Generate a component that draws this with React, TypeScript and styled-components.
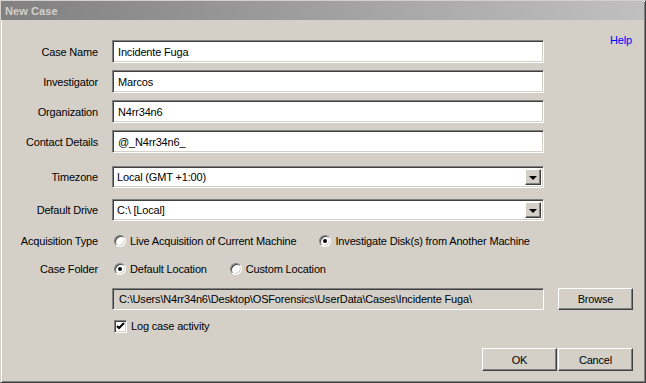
import styled, { createGlobalStyle } from "styled-components";

const GlobalStyle = createGlobalStyle`
  html, body {
    margin: 0;
    padding: 0;
    width: 646px;
    height: 383px;
    overflow: hidden;
    background: #d4d0c8;
  }
  * {
    box-sizing: border-box;
  }
`;

// Window chrome
const Window = styled.div`
  width: 646px;
  height: 383px;
  background: #d4d0c8;
  border-top: 1px solid #d4d0c8;
  border-left: 1px solid #d4d0c8;
  border-right: 1px solid #404040;
  border-bottom: 1px solid #404040;
  box-shadow: inset 1px 1px #ffffff, inset -1px -1px #808080;
  font-family: "Liberation Sans", Arial, sans-serif;
  font-size: 11px;
  letter-spacing: -0.17px;
  color: #000;
  display: flex;
  flex-direction: column;
`;

const TitleBar = styled.div`
  height: 19px;
  margin: 0 1px 0 0;
  background: linear-gradient(to right, #808080, #c0c0c0);
  display: flex;
  align-items: center;
  padding-left: 4px;
`;

const TitleText = styled.span`
  font-weight: bold;
  color: #d4d0c8;
  font-size: 11px;
  letter-spacing: 0.1px;
`;

const Body = styled.div`
  display: flex;
  flex-direction: column;
  padding-top: 20px;
  padding-left: 1px;
`;

const Row = styled.div<{ $top: number; $h: number }>`
  display: grid;
  grid-template-columns: 96px 432px 75px;
  column-gap: 14px;
  align-items: center;
  height: ${(p) => p.$h}px;
  margin-top: ${(p) => p.$top}px;
`;

const Label = styled.label`
  text-align: right;
  white-space: nowrap;
`;

const sunken = `
  border: 1px solid;
  border-color: #808080 #ffffff #ffffff #808080;
  box-shadow: inset 1px 1px #404040, inset -1px -1px #d4d0c8;
`;

const TextField = styled.div<{ $disabled?: boolean }>`
  ${sunken}
  height: 100%;
  background: ${(p) => (p.$disabled ? "#d4d0c8" : "#ffffff")};
  display: flex;
  align-items: center;
  padding-left: ${(p) => (p.$disabled ? 6 : 5)}px;
  white-space: nowrap;
  overflow: hidden;
`;

const Select = styled.div`
  ${sunken}
  height: 100%;
  background: #ffffff;
  display: flex;
  align-items: center;
  justify-content: space-between;
  padding: 2px 2px 2px 4px;
`;

const raised = `
  background: #d4d0c8;
  border: 1px solid;
  border-color: #ffffff #404040 #404040 #ffffff;
  box-shadow: inset -1px -1px #808080, inset 1px 1px #d4d0c8;
`;

const DropButton = styled.div`
  ${raised}
  width: 16px;
  height: 100%;
  display: flex;
  align-items: center;
  justify-content: center;
`;

const Arrow = styled.div`
  width: 0;
  height: 0;
  border-left: 4px solid transparent;
  border-right: 4px solid transparent;
  border-top: 4px solid #000;
  margin-top: 1px;
`;

const Help = styled.span`
  color: #0000ff;
  justify-self: end;
  align-self: start;
  margin-top: -6px;
  margin-right: 1px;
`;

const Options = styled.div`
  display: flex;
  align-items: center;
  gap: 21px;
  white-space: nowrap;
`;

const Option = styled.span`
  display: flex;
  align-items: center;
  gap: 4px;
`;

const Radio = styled.span<{ $checked?: boolean }>`
  width: 12px;
  height: 12px;
  border-radius: 50%;
  background: #ffffff;
  border: 1px solid;
  border-color: #808080 #ffffff #ffffff #808080;
  box-shadow: inset 1px 1px #404040, inset -1px -1px #d4d0c8;
  display: flex;
  align-items: center;
  justify-content: center;
  margin-left: 2px;

  &::after {
    content: "";
    width: 4px;
    height: 4px;
    border-radius: 50%;
    background: ${(p) => (p.$checked ? "#000" : "transparent")};
  }
`;

const Check = styled.span`
  ${sunken}
  width: 13px;
  height: 13px;
  background: #ffffff;
  display: flex;
  align-items: center;
  justify-content: center;
  margin-left: 2px;
`;

const Button = styled.div<{ $width?: number }>`
  ${raised}
  width: ${(p) => p.$width ?? 75}px;
  height: 100%;
  display: flex;
  align-items: center;
  justify-content: center;
`;

const Footer = styled.div`
  display: flex;
  justify-content: flex-end;
  gap: 1px;
  height: 23px;
  margin-top: 14px;
  padding-right: 12px;
`;

const fields = [
  { label: "Case Name", value: "Incidente Fuga" },
  { label: "Investigator", value: "Marcos" },
  { label: "Organization", value: "N4rr34n6" },
  { label: "Contact Details", value: "@_N4rr34n6_" },
];

const App = () => {
  return (
    <>
      <GlobalStyle />
      <Window>
        <TitleBar>
          <TitleText>New Case</TitleText>
        </TitleBar>
        <Body>
          {fields.map((f, i) => (
            <Row key={f.label} $top={i === 0 ? 0 : 7} $h={23}>
              <Label>{f.label}</Label>
              <TextField>{f.value}</TextField>
              {i === 0 ? <Help>Help</Help> : <span />}
            </Row>
          ))}

          <Row $top={13} $h={22}>
            <Label>Timezone</Label>
            <Select>
              <span>Local (GMT +1:00)</span>
              <DropButton>
                <Arrow />
              </DropButton>
            </Select>
          </Row>

          <Row $top={11} $h={22}>
            <Label>Default Drive</Label>
            <Select>
              <span>C:\ [Local]</span>
              <DropButton>
                <Arrow />
              </DropButton>
            </Select>
          </Row>

          <Row $top={12} $h={16}>
            <Label>Acquisition Type</Label>
            <Options>
              <Option>
                <Radio />
                Live Acquisition of Current Machine
              </Option>
              <Option>
                <Radio $checked />
                Investigate Disk(s) from Another Machine
              </Option>
            </Options>
          </Row>

          <Row $top={12} $h={16}>
            <Label>Case Folder</Label>
            <Options>
              <Option>
                <Radio $checked />
                Default Location
              </Option>
              <Option>
                <Radio />
                Custom Location
              </Option>
            </Options>
          </Row>

          <Row $top={11} $h={22}>
            <span />
            <TextField $disabled>
              C:\Users\N4rr34n6\Desktop\OSForensics\UserData\Cases\Incidente Fuga\
            </TextField>
            <Button>Browse</Button>
          </Row>

          <Row $top={8} $h={16}>
            <span />
            <Option>
              <Check>
                <svg width="9" height="9" viewBox="0 0 9 9">
                  <path
                    d="M1 4 L3 6 L8 1"
                    stroke="#000"
                    strokeWidth="2"
                    fill="none"
                  />
                </svg>
              </Check>
              Log case activity
            </Option>
            <span />
          </Row>

          <Footer>
            <Button>OK</Button>
            <Button>Cancel</Button>
          </Footer>
        </Body>
      </Window>
    </>
  );
};

export default App;
